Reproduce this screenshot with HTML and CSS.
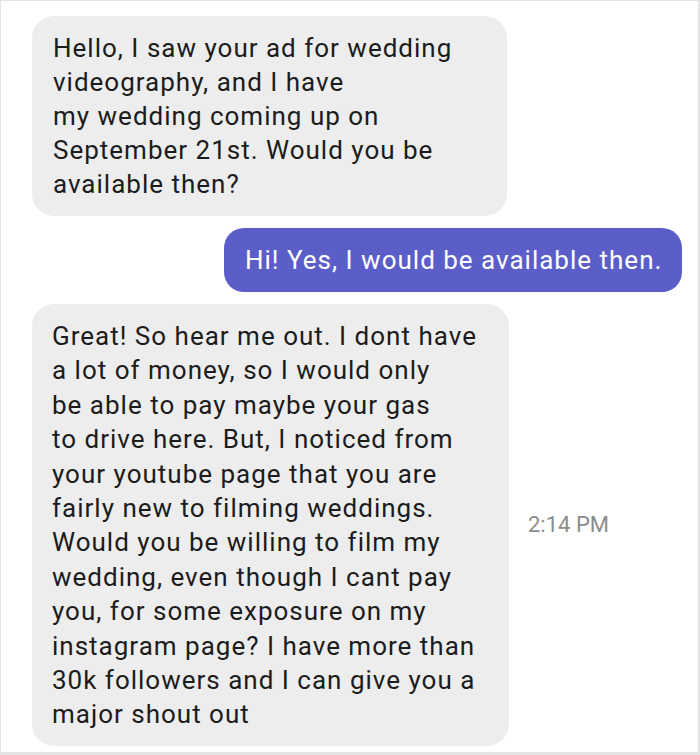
FILE: index.html
```html
<!DOCTYPE html>
<html>
<head>
<meta charset="utf-8">
<link rel="stylesheet" href="styles.css">
</head>
<body>
<div class="frame">
  <div class="chat">
    <div class="row">
      <div class="bubble in first">Hello, I saw your ad for wedding<br>videography, and I have<br>my wedding coming up on<br>September 21st. Would you be<br>available then?</div>
    </div>
    <div class="row out-row">
      <div class="bubble out">Hi! Yes, I would be available then.</div>
    </div>
    <div class="row">
      <div class="bubble in third">Great! So hear me out. I dont have<br>a lot of money, so I would only<br>be able to pay maybe your gas<br>to drive here. But, I noticed from<br>your youtube page that you are<br>fairly new to filming weddings.<br>Would you be willing to film my<br>wedding, even though I cant pay<br>you, for some exposure on my<br>instagram page? I have more than<br>30k followers and I can give you a<br>major shout out</div>
      <div class="time">2:14 PM</div>
    </div>
  </div>
</div>
</body>
</html>
```

FILE: styles.css
```css
html, body {
  margin: 0;
  padding: 0;
  background: #ffffff;
}
.frame {
  width: 700px;
  height: 755px;
  box-sizing: border-box;
  border-top: 1px solid #e4e4e4;
  border-left: 1px solid #e4e4e4;
  border-right: 2px solid #e4e4e4;
  border-bottom: 3px solid #e4e4e4;
  overflow: hidden;
  font-family: Roboto, "Liberation Sans", sans-serif;
}
.chat {
  display: flex;
  flex-direction: column;
  gap: 12px;
  padding: 15px 0 0 31px;
}
.row {
  display: flex;
  align-items: center;
  gap: 13px;
}
.out-row {
  justify-content: flex-end;
  padding-right: 16px;
}
.bubble {
  box-sizing: border-box;
  white-space: nowrap;
  font-size: 26px;
  letter-spacing: 1px;
  color: #1c1c1c;
  border-radius: 22px;
}
.in {
  background: #ededed;
}
.first {
  width: 475px;
  padding: 15px 10px 15px 21px;
  line-height: 34px;
}
.out {
  background: #5b5ec9;
  color: #ffffff;
  padding: 15px 10px 15px 21px;
  line-height: 34px;
  border-radius: 20px;
  width: 458px;
}
.third {
  width: 477px;
  padding: 15px 10px 14px 20px;
  line-height: 34.4px;
}
.time {
  font-size: 22px;
  color: #8c8c8c;
  padding-left: 6px;
}
```
